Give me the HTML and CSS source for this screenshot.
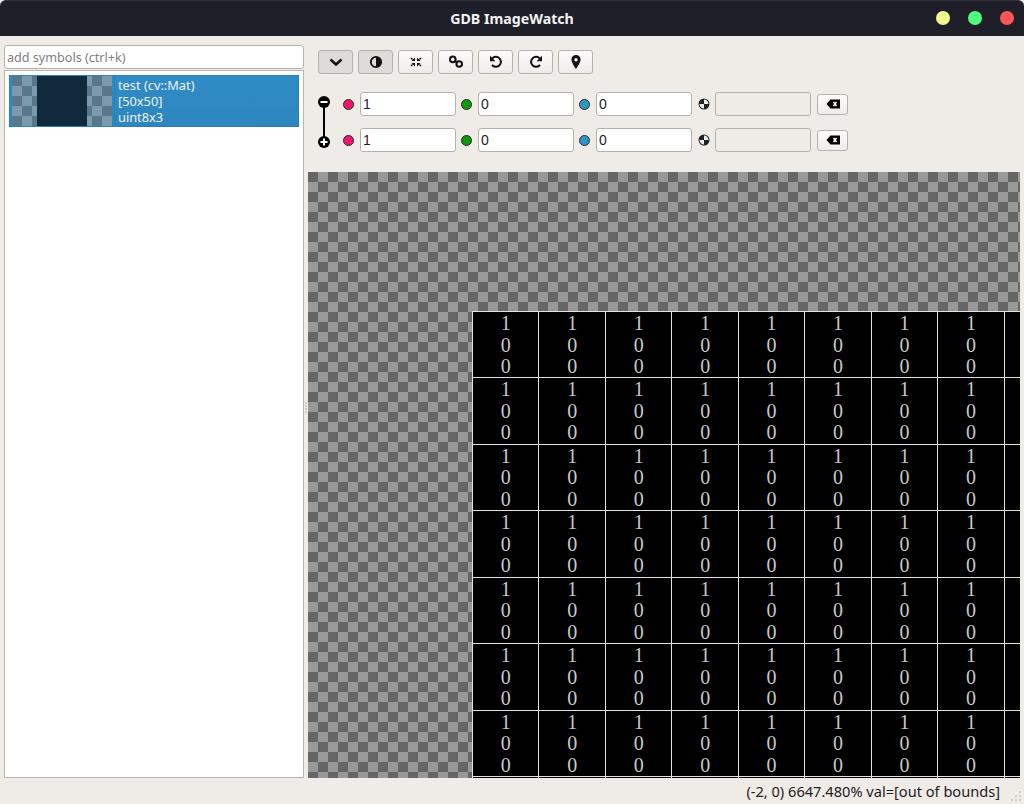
FILE: index.html
```html
<!DOCTYPE html>
<html lang="en">
  <head>
    <meta charset="UTF-8" />
    <title>GDB ImageWatch</title>
    <link rel="stylesheet" href="styles.css">
  </head>
  <body>
    <div class="window">
      <header class="titlebar">
        <span class="title">GDB ImageWatch</span>
        <div class="lights">
          <i class="light yellow"></i>
          <i class="light green"></i>
          <i class="light red"></i>
        </div>
      </header>

      <div class="main">
        <aside class="sidebar">
          <input class="search" type="text" placeholder="add symbols (ctrl+k)" />
          <div class="list">
            <div class="item">
              <div class="thumb"><div class="thumb-img"></div></div>
              <div class="item-text">test (cv::Mat)<br />[50x50]<br />uint8x3</div>
            </div>
          </div>
        </aside>

        <div class="splitter"><i></i><i></i><i></i><i></i></div>

        <section class="content">
          <div class="toolbar">
            <button class="tool on"><svg width="16" height="16" viewBox="0 0 16 16"><path d="M2.5 5.5 8 10.5l5.5-5" fill="none" stroke="#111" stroke-width="2.6"/></svg></button>
            <button class="tool on"><svg width="16" height="16" viewBox="0 0 16 16"><circle cx="8" cy="8" r="5.2" fill="none" stroke="#111" stroke-width="1.8"/><path d="M8 3a5 5 0 0 1 0 10z" fill="#111"/></svg></button>
            <button class="tool"><svg width="16" height="16" viewBox="0 0 16 16"><path d="M7 7V3.500L3.500 7zM9 7V3.500L12.500 7zM7 9v3.500L3.500 9zM9 9v3.500L12.500 9z" fill="#111"/><path d="M4.500 5.500 3 4M11.500 5.500 13 4M4.500 10.500 3 12M11.500 10.500 13 12" stroke="#111" stroke-width="1.500"/></svg></button>
            <button class="tool"><svg width="16" height="16" viewBox="0 0 16 16"><g fill="none" stroke="#111" stroke-width="2"><circle cx="4.800" cy="5.400" r="2.800"/><circle cx="11.200" cy="10" r="2.800"/><path d="M6.500 6.700l3 2"/></g></svg></button>
            <button class="tool"><svg width="16" height="16" viewBox="0 0 16 16"><path d="M4.200 4.500A5 5 0 1 1 4 11" fill="none" stroke="#111" stroke-width="2"/><path d="M2 1.800v5.400h5.400z" fill="#111"/></svg></button>
            <button class="tool"><svg width="16" height="16" viewBox="0 0 16 16"><path d="M11.800 4.500A5 5 0 1 0 12 11" fill="none" stroke="#111" stroke-width="2"/><path d="M14 1.800v5.400H8.600z" fill="#111"/></svg></button>
            <button class="tool"><svg width="16" height="16" viewBox="0 0 16 16"><path fill-rule="evenodd" d="M8 1a4.600 4.600 0 0 1 4.600 4.600C12.600 8.800 8 15 8 15S3.400 8.800 3.400 5.600A4.600 4.600 0 0 1 8 1zm0 3a1.700 1.700 0 1 0 0 3.400A1.700 1.700 0 0 0 8 4z" fill="#111"/></svg></button>
          </div>

          <div class="ranges">
            <svg class="range-link" width="16" height="60" viewBox="0 0 16 60">
              <path d="M8 8v40" stroke="#000" stroke-width="2"/>
              <circle cx="8" cy="8" r="6" fill="#000"/>
              <path d="M4.500 8h7" stroke="#fff" stroke-width="2"/>
              <circle cx="8" cy="48" r="6" fill="#000"/>
              <path d="M4.500 48h7M8 44.500v7" stroke="#fff" stroke-width="2"/>
            </svg>
            <div class="range-rows">
              <div class="range-row">
                <i class="dot pink"></i><input class="num" type="text" value="1" />
                <i class="dot grn"></i><input class="num" type="text" value="0" />
                <i class="dot blue"></i><input class="num" type="text" value="0" />
                <svg class="alpha" width="12" height="12" viewBox="0 0 12 12"><circle cx="6" cy="6" r="5.500" fill="#1c2326"/><path d="M6 6V1.500A4.500 4.500 0 0 1 10.500 6zM6 6v4.500A4.500 4.500 0 0 1 1.500 6z" fill="#eee"/></svg>
                <input class="num off" type="text" disabled />
                <button class="clear"><svg width="16" height="12" viewBox="0 0 16 12"><path d="M5.500 1.500H15v9H5.500L1.500 6z" fill="#000"/><path d="M8.500 4l3 4M11.500 4l-3 4" stroke="#fff" stroke-width="1.500"/></svg></button>
              </div>
              <div class="range-row">
                <i class="dot pink"></i><input class="num" type="text" value="1" />
                <i class="dot grn"></i><input class="num" type="text" value="0" />
                <i class="dot blue"></i><input class="num" type="text" value="0" />
                <svg class="alpha" width="12" height="12" viewBox="0 0 12 12"><circle cx="6" cy="6" r="5.500" fill="#1c2326"/><path d="M6 6V1.500A4.500 4.500 0 0 1 10.500 6zM6 6v4.500A4.500 4.500 0 0 1 1.500 6z" fill="#eee"/></svg>
                <input class="num off" type="text" disabled />
                <button class="clear"><svg width="16" height="12" viewBox="0 0 16 12"><path d="M5.500 1.500H15v9H5.500L1.500 6z" fill="#000"/><path d="M8.500 4l3 4M11.500 4l-3 4" stroke="#fff" stroke-width="1.500"/></svg></button>
              </div>
            </div>
          </div>

          <div class="viewer">
            <div class="pixels" id="pixels"></div>
          </div>
        </section>
      </div>

      <footer class="status">
        <span>(-2, 0) 6647.480% val=[out of bounds]</span>
        <svg class="grip" width="12" height="12" viewBox="0 0 12 12" fill="#cfcbc6"><rect x="9" y="1" width="2" height="2"/><rect x="5" y="5" width="2" height="2"/><rect x="9" y="5" width="2" height="2"/><rect x="1" y="9" width="2" height="2"/><rect x="5" y="9" width="2" height="2"/><rect x="9" y="9" width="2" height="2"/></svg>
      </footer>
    </div>

    <script>
      // fill the visible part of the buffer, 9 x 8 pixels
      // last column and last row are cut by the viewer, their values don't show
      const pixels = document.getElementById("pixels");
      for (let i = 0; i < 72; i++) {
        const cell = document.createElement("div");
        cell.className = "pixel";
        if (i < 63 && i % 9 !== 8) {
          cell.innerHTML = "1<br>0<br>0";
        }
        pixels.appendChild(cell);
      }
    </script>
  </body>
</html>
```

FILE: styles.css
```css
* {
  box-sizing: border-box;
}
html,
body {
  margin: 0;
  height: 100%;
  overflow: hidden;
}
body {
  background-color: #1e1f29;
  font-family: "Noto Sans", sans-serif;
  font-size: 13px;
  color: #222;
}
.window {
  width: 1024px;
  height: 804px;
  display: flex;
  flex-direction: column;
  background-color: #efebe7;
}
.titlebar {
  height: 36px;
  flex: none;
  display: flex;
  align-items: center;
  justify-content: center;
  background-color: #1e1f29;
  border-top: 1px solid #2e2f39;
  border-radius: 6px 6px 0 0;
  position: relative;
}
.title {
  color: #f4f4f4;
  font-weight: 700;
  font-size: 14.2px;
}
.lights {
  position: absolute;
  right: 10px;
  top: 10px;
  display: flex;
  gap: 18px;
}
.light {
  width: 14px;
  height: 14px;
  border-radius: 50%;
}
.yellow {
  background-color: #f1fa8c;
}
.green {
  background-color: #50fa7b;
}
.red {
  background-color: #ff5555;
}

.main {
  flex: 1;
  min-height: 0;
  display: flex;
}
.sidebar {
  width: 300px;
  margin: 9px 0 0 4px;
  flex: none;
  display: flex;
  flex-direction: column;
  gap: 1px;
}
.search {
  height: 24px;
  flex: none;
  padding: 0 2px;
  border: 1px solid #b5b1ac;
  border-radius: 3px;
  background-color: #fff;
  font: 12.6px "Noto Sans", sans-serif;
}
.search::placeholder {
  color: #7f7f7f;
  opacity: 1;
}
.list {
  flex: 1;
  background-color: #fff;
  border: 1px solid #b9b5b0;
  padding: 4px;
}
.item {
  height: 52px;
  display: flex;
  background: linear-gradient(#308cc6, #2d86be);
  border: 1px solid #2a80b8;
  color: #eef5fa;
  font-size: 12.8px;
  line-height: 16px;
}
.thumb {
  width: 100px;
  height: 50px;
  margin-left: 2px;
  flex: none;
  display: flex;
  justify-content: center;
  background: conic-gradient(#7c9aae 25%, #587789 0 50%, #7c9aae 0 75%, #587789 0) 0 0 / 20px 20px;
}
.thumb-img {
  width: 50px;
  background-color: #102a3c;
}
.item-text {
  margin-left: 2px;
  padding: 1px 0 0 3px;
  border-left: 1px solid #2a80b8;
}

.splitter {
  width: 4px;
  flex: none;
  display: flex;
  flex-direction: column;
  align-items: center;
  justify-content: center;
  gap: 1px;
}
.splitter i {
  width: 2px;
  height: 2px;
  background-color: #cfcbc6;
}

.content {
  flex: 1;
  min-width: 0;
  display: flex;
  flex-direction: column;
}
.toolbar {
  height: 56px;
  flex: none;
  padding: 14px 0 0 10px;
  display: flex;
  gap: 5px;
}
.tool {
  width: 35px;
  height: 24px;
  padding: 0;
  display: flex;
  align-items: center;
  justify-content: center;
  border: 1px solid #b5b1ac;
  border-radius: 3px;
  background: linear-gradient(#fcfcfb, #eeecea);
}
.tool.on {
  background: #dedad7;
}
.ranges {
  height: 80px;
  flex: none;
  display: flex;
  align-items: flex-start;
}
.range-link {
  margin: 2px 0 0 8px;
  flex: none;
}
.range-rows {
  margin-left: 9px;
  display: flex;
  flex-direction: column;
  gap: 12px;
}
.range-row {
  height: 24px;
  display: flex;
  align-items: center;
}
.dot {
  width: 11px;
  height: 11px;
  margin: 0 6px 0 2px;
  border-radius: 50%;
  border: 1px solid #2a2a2a;
  flex: none;
}
.dot.grn,
.dot.blue {
  margin-left: 5px;
}
.pink {
  background-color: #f0166c;
}
.grn {
  background-color: #0a9a0a;
}
.blue {
  background-color: #2f96c4;
}
.num {
  width: 96px;
  height: 24px;
  padding: 0 2px;
  border: 1px solid #b5b1ac;
  border-radius: 3px;
  background-color: #fff;
  font: 14px "Liberation Sans", sans-serif;
  color: #222;
}
.num.off {
  background-color: #efebe7;
}
.alpha {
  margin: 0 5px 0 6px;
  flex: none;
}
.clear {
  width: 31px;
  height: 21px;
  margin-left: 6px;
  padding: 0;
  display: flex;
  align-items: center;
  justify-content: center;
  border: 1px solid #b5b1ac;
  border-radius: 3px;
  background: linear-gradient(#fcfcfb, #eeecea);
}

.viewer {
  width: 712px;
  height: 606px;
  padding: 139px 0 0 164px;
  overflow: hidden;
  background: conic-gradient(#999 25%, #666 0 50%, #999 0 75%, #666 0) 0 0 / 20px 20px;
}
.pixels {
  width: 598.23px;
  display: grid;
  grid-template-columns: repeat(9, 66.47px);
  grid-auto-rows: 66.47px;
  background-color: #000;
}
.pixel {
  padding-top: 1px;
  border-left: 1px solid #e2e2e2;
  border-top: 1px solid #e2e2e2;
  text-align: center;
  color: #c8c8c8;
  font: 20px/21.5px "Liberation Serif", serif;
}

.status {
  height: 26px;
  flex: none;
  padding-right: 24px;
  display: flex;
  align-items: center;
  justify-content: flex-end;
  font-size: 14.6px;
  color: #222;
  position: relative;
}
.grip {
  position: absolute;
  right: 2px;
  bottom: 2px;
}
```
